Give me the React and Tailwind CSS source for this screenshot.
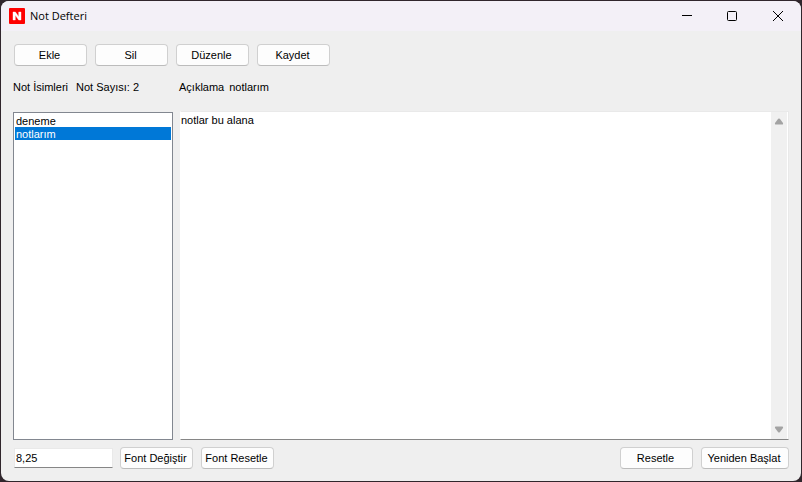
import { useState } from 'react';

const initialNotes = [
  { name: 'deneme', text: '' },
  { name: 'notlarım', text: 'notlar bu alana' },
];

function Button({ children, className = 'w-[73px]', onClick }) {
  return (
    <button
      type="button"
      onClick={onClick}
      className={`${className} h-[22px] shrink-0 whitespace-nowrap rounded border border-[#d0d0d0] border-b-[#bcbcbc] bg-[#fdfdfd] pr-0.5 text-center leading-4 hover:bg-[#e0eef9]`}
    >
      {children}
    </button>
  );
}

function AppIcon() {
  return (
    <svg width="16" height="16" viewBox="0 0 16 16" aria-hidden="true">
      <rect width="16" height="16" rx="1" fill="#fe0000" />
      <path d="M4 12V4h2.4l3.3 4.7V4H12v8H9.7L6.3 7.2V12z" fill="#fff" stroke="#fff" strokeWidth="0.4" />
    </svg>
  );
}

function TitleBar() {
  return (
    <header className="flex h-[30px] shrink-0 items-center bg-[#f3f0f7] pl-2">
      <AppIcon />
      <h1 className="ml-[5px] flex-1 font-['Open_Sans','Noto_Sans',sans-serif] text-[11px] leading-4">Not Defteri</h1>
      <button type="button" aria-label="Küçült" className="flex h-full w-[45px] items-center justify-center hover:bg-black/5">
        <svg width="10" height="10" viewBox="0 0 10 10">
          <path d="M0 4.5h10" stroke="#000" />
        </svg>
      </button>
      <button type="button" aria-label="Ekranı kapla" className="flex h-full w-[46px] items-center justify-center hover:bg-black/5">
        <svg width="10" height="10" viewBox="0 0 10 10">
          <rect x="0.5" y="0.5" width="9" height="9" rx="1" fill="none" stroke="#000" />
        </svg>
      </button>
      <button type="button" aria-label="Kapat" className="flex h-full w-[46px] items-center justify-center hover:bg-red-600">
        <svg width="10" height="10" viewBox="0 0 10 10">
          <path d="M0 0l10 10M10 0L0 10" stroke="#000" />
        </svg>
      </button>
    </header>
  );
}

export default function App() {
  const [notes, setNotes] = useState(initialNotes);
  const [selected, setSelected] = useState(1);
  const [fontSize, setFontSize] = useState('8,25');

  const current = notes[selected];

  const addNote = () => {
    setNotes([...notes, { name: 'yeni not', text: '' }]);
    setSelected(notes.length);
  };

  const deleteNote = () => {
    setNotes(notes.filter((_, i) => i !== selected));
    setSelected(0);
  };

  const changeText = (e) => {
    setNotes(notes.map((n, i) => (i === selected ? { ...n, text: e.target.value } : n)));
  };

  const reset = () => {
    setNotes(initialNotes);
    setSelected(1);
  };

  return (
    <div className="h-screen bg-[#30262c] p-px font-['Liberation_Sans',Arial,sans-serif] text-[11px] text-black">
      <div className="flex h-full flex-col overflow-hidden rounded-lg bg-[#efefef]">
        <TitleBar />

        <main className="flex min-h-0 flex-1 flex-col px-3 pb-3">
          {/* Toolbar */}
          <div className="flex gap-2 pl-px pt-[13px]">
            <Button onClick={addNote}>Ekle</Button>
            <Button onClick={deleteNote}>Sil</Button>
            <Button>Düzenle</Button>
            <Button>Kaydet</Button>
          </div>

          {/* Labels */}
          <div className="mt-[13px] flex leading-4">
            <div className="flex w-[166px] gap-2">
              <span id="note-names">Not İsimleri</span>
              <span>Not Sayısı: {notes.length}</span>
            </div>
            <div className="flex gap-[5px]">
              <label htmlFor="note-text">Açıklama</label>
              <span>{current?.name}</span>
            </div>
          </div>

          {/* Note list and text */}
          <div className="mt-4 flex min-h-0 flex-1 gap-[7px]">
            <ul
              role="listbox"
              aria-labelledby="note-names"
              tabIndex={0}
              className="mt-px w-40 shrink-0 overflow-y-auto border border-[#828790] bg-white p-px outline-none"
            >
              {notes.map((note, i) => (
                <li
                  key={i}
                  role="option"
                  aria-selected={i === selected}
                  onClick={() => setSelected(i)}
                  className={`h-[13px] px-px leading-[14px] ${i === selected ? 'bg-[#0078d7] text-white' : ''}`}
                >
                  {note.name}
                </li>
              ))}
            </ul>

            <div className="flex min-w-0 flex-1 border border-[#e9e9e9] border-b-[#868686] border-l-white bg-white pr-px">
              <textarea
                id="note-text"
                value={current?.text ?? ''}
                onChange={changeText}
                className="min-w-0 flex-1 resize-none overflow-hidden leading-4 outline-none"
              />
              <div className="flex w-4 shrink-0 flex-col items-center justify-between bg-[#f0f0f0] py-1.5">
                <button type="button" aria-label="Yukarı kaydır">
                  <svg className="block" width="10" height="7" viewBox="0 0 10 7">
                    <path d="M4.2 0.8Q5 0 5.8 0.8L9 5Q9.5 6.5 8.3 6.5H1.7Q0.5 6.5 1 5z" fill="#a3a3a3" />
                  </svg>
                </button>
                <button type="button" aria-label="Aşağı kaydır">
                  <svg className="block" width="10" height="7" viewBox="0 0 10 7">
                    <path d="M4.2 6.2Q5 7 5.8 6.2L9 2Q9.5 0.5 8.3 0.5H1.7Q0.5 0.5 1 2z" fill="#a3a3a3" />
                  </svg>
                </button>
              </div>
            </div>
          </div>

          {/* Font settings and reset */}
          <div className="mt-[7px] flex items-center pl-px">
            <input
              type="text"
              aria-label="Font boyutu"
              value={fontSize}
              onChange={(e) => setFontSize(e.target.value)}
              className="mr-[7px] h-5 w-[99px] border border-[#e9e9e9] border-b-[#868686] bg-white px-px outline-none"
            />
            <div className="flex gap-2">
              <Button>Font Değiştir</Button>
              <Button onClick={() => setFontSize('8,25')}>Font Resetle</Button>
            </div>
            <div className="ml-auto flex gap-2">
              <Button onClick={reset}>Resetle</Button>
              <Button className="w-[88px]">Yeniden Başlat</Button>
            </div>
          </div>
        </main>
      </div>
    </div>
  );
}
